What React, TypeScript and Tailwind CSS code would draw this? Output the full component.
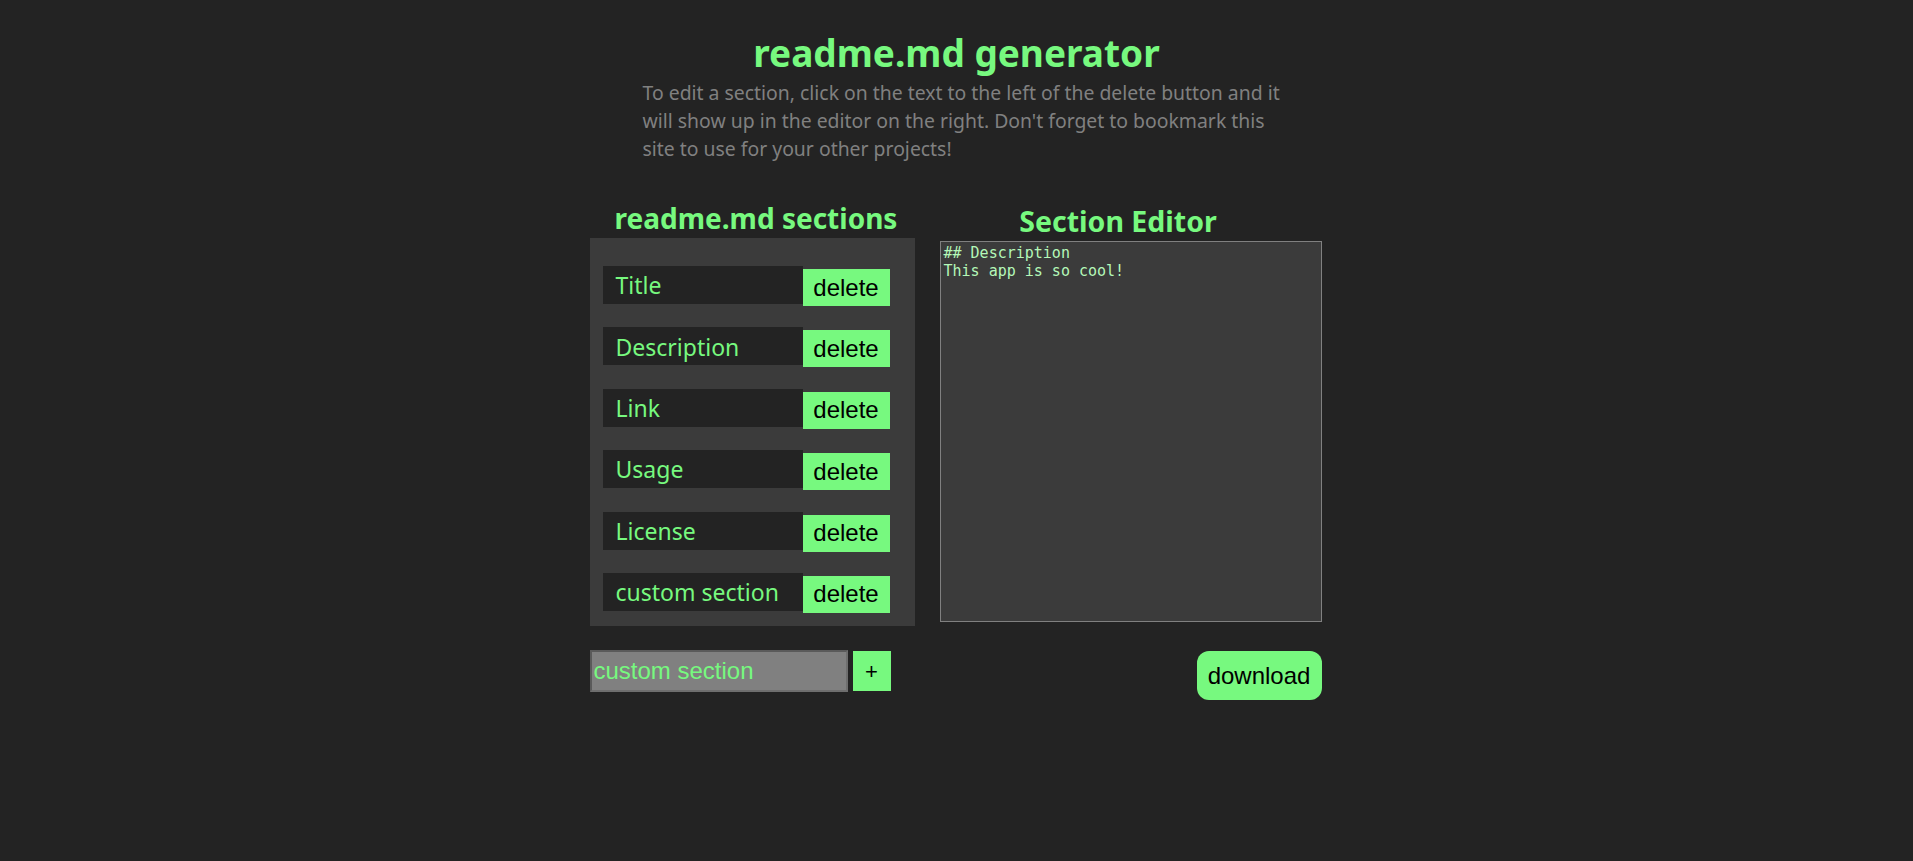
import { useState } from "react";

const sans = "font-['Noto_Sans',_'Open_Sans',_sans-serif]";
const arial = "font-['Liberation_Sans',_Arial,_sans-serif]";

const App = () => {
  const [sections, setSections] = useState([
    "Title",
    "Description",
    "Link",
    "Usage",
    "License",
    "custom section",
  ]);
  const [custom, setCustom] = useState("custom section");
  const [editor, setEditor] = useState("## Description\nThis app is so cool!");

  function removeSection(index: number) {
    setSections(sections.filter((_, i) => i !== index));
  }

  function addSection() {
    if (custom.trim()) setSections([...sections, custom]);
  }

  return (
    <div className={`min-h-screen bg-[#232323] ${sans}`}>
      <header className="flex flex-col items-center pt-[27px]">
        <h1 className="text-[37px] font-bold leading-[52px] text-[#77f97f]">
          readme.md generator
        </h1>
        <p className="w-[660px] pl-[16px] text-[19.4px] leading-[28px] text-[#808080]">
          To edit a section, click on the text to the left of the delete button
          and it will show up in the editor on the right. Don't forget to
          bookmark this site to use for your other projects!
        </p>
      </header>

      <main className="mx-auto mt-[35px] flex w-[734px] pr-[2px]">
        <div className="flex w-[325px] flex-col">
          <h2 className="pl-[8px] text-center text-[28px] font-bold leading-[40px] text-[#77f97f]">
            readme.md sections
          </h2>
          <div className="flex h-[388px] flex-col gap-[21.4px] bg-[#3b3b3b] pl-[13px] pt-[28px]">
            {sections.map((item, index) => (
              <div className="flex items-start" key={index}>
                <div className="flex h-[38px] w-[200px] cursor-pointer items-center bg-[#232323] pl-[13px] pt-[1px] text-[23px] text-[#77f97f]">
                  {item}
                </div>
                <button
                  onClick={() => removeSection(index)}
                  className={`mt-[3px] h-[37px] w-[87px] bg-[#77f97f] text-[24px] text-black ${arial}`}
                >
                  delete
                </button>
              </div>
            ))}
          </div>
          <div className="mt-[24px] flex items-start gap-[5px]">
            <input
              value={custom}
              onChange={(e) => setCustom(e.target.value)}
              className={`h-[42px] w-[258px] border-2 border-[#6e6e6e] border-t-[#5a5a5a] border-l-[#5a5a5a] bg-[#808080] px-[2px] text-[24px] text-[#77f97f] outline-none ${arial}`}
            />
            <button
              onClick={addSection}
              className={`mt-[1px] h-[40px] w-[38px] bg-[#77f97f] text-[22px] text-black ${arial}`}
            >
              +
            </button>
          </div>
        </div>

        <div className="mt-[3px] flex flex-1 flex-col">
          <h2 className="text-center text-[28.5px] font-bold leading-[40px] text-[#77f97f]">
            Section Editor
          </h2>
          <textarea
            value={editor}
            onChange={(e) => setEditor(e.target.value)}
            className="ml-[25px] h-[381px] w-[382px] resize-none border border-[#808080] bg-[#3b3b3b] px-[3px] pt-[2px] font-['DejaVu_Sans_Mono',_monospace] text-[15px] leading-[18px] text-[#b4f8b8] outline-none"
          />
          <div className="mt-[29px] flex justify-end">
            <button
              className={`h-[49px] w-[125px] rounded-[12px] bg-[#77f97f] text-[24px] text-black ${arial}`}
            >
              download
            </button>
          </div>
        </div>
      </main>
    </div>
  );
};

export default App;
